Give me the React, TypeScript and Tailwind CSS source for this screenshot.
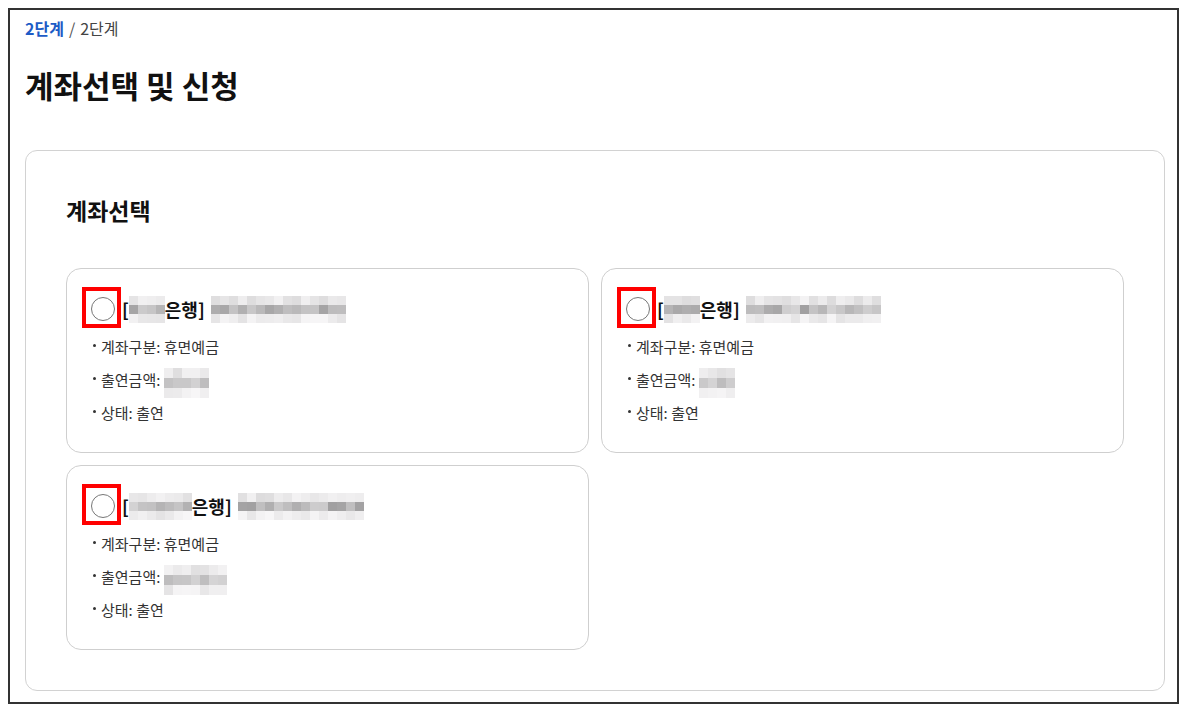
import React from "react";

function rand(seed: number) {
  let s = seed;
  return () => {
    s = (s * 9301 + 49297) % 233280;
    return s / 233280;
  };
}

function mix(a: number, b: number, t: number) {
  const v = Math.round(a + (b - a) * t);
  return `rgb(${v + 1},${v},${v + 1})`;
}

function Blur({ cols, seed, h = 9, w = 9, dark = 1 }: { cols: number; seed: number; h?: number; w?: number; dark?: number }) {
  const r = rand(seed);
  const columns = Array.from({ length: cols }, () => [
    mix(242, 220, r()),
    mix(215, 215 - 55 * dark, r()),
    mix(247, 226, r()),
  ]);
  return (
    <span className="inline-flex align-middle">
      {columns.map((c, i) => (
        <span key={i} className="flex flex-col">
          {c.map((col, j) => (
            <span key={j} style={{ backgroundColor: col, width: w, height: h }} />
          ))}
        </span>
      ))}
    </span>
  );
}

type Card = { b1: number; b2: number; amt: number; seed: number };

function Bullet() {
  return <span className="w-[3px] h-[3px] rounded-full bg-[#333] ml-[2px] mr-[5px] -mt-[3px] shrink-0" />;
}

function AccountCard({ b1, b2, amt, seed }: Card) {
  return (
    <div className="border border-[#cfcfcf] rounded-[15px] pl-[24px] pr-[20px] pt-[28px] pb-[29px]">
      <div className="flex items-center h-[24px]">
        <div className="relative w-[24px] h-[24px] shrink-0">
          <div className="w-[24px] h-[24px] rounded-full border border-[#777] bg-white" />
          <div className="absolute -left-[9px] -top-[10px] w-[39px] h-[41px] border-4 border-[#ff0000]" />
        </div>
        <div className="ml-[7px] flex items-center text-[18px] font-bold text-[#111] leading-[24px] h-[24px]">
          <span>[</span>
          <Blur cols={b1} seed={seed} h={9} w={9} />
          <span>은행]</span>
          <span className="ml-[6px] flex items-center">
            <Blur cols={b2} seed={seed + 7} h={9} w={9} />
          </span>
        </div>
      </div>
      <ul className="mt-[15px] flex flex-col gap-[12px] text-[15px] leading-[21px] text-[#333]">
        <li className="flex items-center h-[21px]">
          <Bullet />
          <span>계좌구분: 휴면예금</span>
        </li>
        <li className="flex items-center h-[21px]">
          <Bullet />
          <span>출연금액:</span>
          <span className="ml-[4px] h-[21px] flex items-center">
            <span className="mt-[6px]">
              <Blur cols={amt} seed={seed + 13} h={10} w={9} dark={0.5} />
            </span>
          </span>
        </li>
        <li className="flex items-center h-[21px]">
          <Bullet />
          <span>상태: 출연</span>
        </li>
      </ul>
    </div>
  );
}

export default function App() {
  const cards: Card[] = [
    { b1: 4, b2: 15, amt: 5, seed: 11 },
    { b1: 4, b2: 15, amt: 4, seed: 37 },
    { b1: 7, b2: 14, amt: 7, seed: 83 },
  ];
  return (
    <div
      className="bg-white min-h-[713px]"
      style={{ fontFamily: '"Noto Sans CJK KR", "Noto Sans", sans-serif' }}
    >
      <div className="ml-2 mt-2 w-[1171px] border-2 border-[#333] pl-[15px] pr-[12px] pb-[11px]">
        <div className="pt-[7px] text-[16px] leading-[22px] text-[#444]">
          <span className="font-bold text-[#1d5bc6]">2단계</span>
          <span className="mx-[5px] text-[#555]">/</span>
          <span>2단계</span>
        </div>
        <h1 className="mt-[26px] text-[31px] leading-[40px] font-bold text-[#111]">계좌선택 및 신청</h1>
        <div className="mt-[45px] w-[1140px] border border-[#d2d2d2] rounded-[12px] px-[40px] pt-[40px] pb-[40px]">
          <h2 className="text-[23px] leading-[38px] font-bold text-[#111] mb-[39px]">계좌선택</h2>
          <div className="grid grid-cols-2 gap-[12px]">
            {cards.map((c, i) => (
              <AccountCard key={i} {...c} />
            ))}
          </div>
        </div>
      </div>
    </div>
  );
}
